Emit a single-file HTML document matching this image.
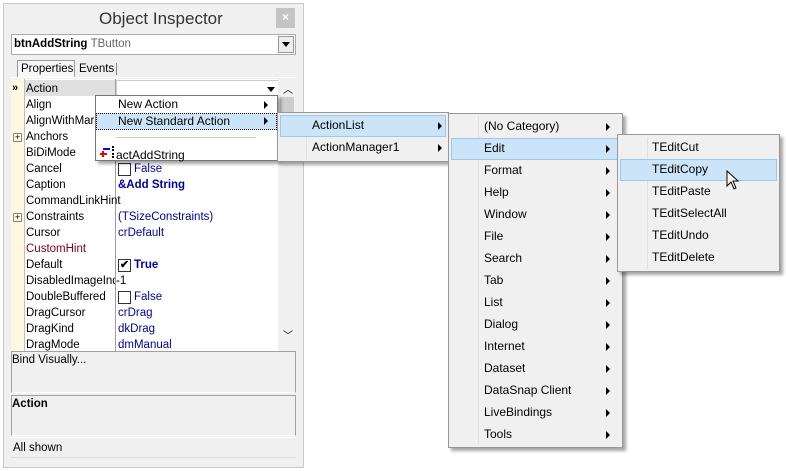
<!DOCTYPE html>
<html><head><style>
*{margin:0;padding:0;box-sizing:border-box}
body{width:786px;height:471px;background:#fff;position:relative;overflow:hidden;font-family:"Liberation Sans",sans-serif;font-size:11.5px;color:#000}
.a{position:absolute}
.t{position:absolute;white-space:nowrap;line-height:16px}
.menu{position:absolute;background:#f0f0f0;border:1px solid #979797;box-shadow:3px 3px 3px rgba(0,0,0,.35)}
.mi{position:absolute;left:2px;right:2px;height:22px;line-height:20px;font-size:12px}
.mi span{position:absolute}
.hl{background:#cce4f7;border:1px solid #99c9ef}
.arr{position:absolute;width:0;height:0;border-left:4px solid #000;border-top:4px solid transparent;border-bottom:4px solid transparent}
.gut{position:absolute;top:2px;bottom:2px;width:1px;background:#e0e0e0}
.blue{color:#0000a0}
</style></head><body>
<div class="a" style="left:3px;top:3px;width:301px;height:465px;background:#f0f0f0;border:1px solid #c8c8c8"></div>
<div class="t" style="left:99px;top:9px;font-size:17px;line-height:20px;color:#333">Object Inspector</div>
<div class="a" style="left:276px;top:8px;width:19px;height:20px;background:#c4c4c4;color:#fff;font-size:12px;text-align:center;line-height:19px;font-weight:bold">×</div>
<div class="a" style="left:11px;top:34px;width:285px;height:21px;background:#fff;border:1px solid #aaa"></div>
<div class="t" style="left:14px;top:36px;font-weight:bold">btnAddString <span style="font-weight:normal;color:#666">TButton</span></div>
<div class="a" style="left:278px;top:36px;width:16px;height:17px;background:#eee;border:1px solid #999"></div>
<div class="arr" style="left:282px;top:42px;border:4px solid transparent;border-top:5px solid #000;border-bottom:none"></div>
<div class="a" style="left:17px;top:60px;width:58px;height:18px;background:#f7f7f7;border:1px solid #999;border-bottom:none"></div>
<div class="t" style="left:21px;top:61px">Properties</div>
<div class="t" style="left:79px;top:61px">Events</div>
<div class="a" style="left:116px;top:63px;width:1px;height:12px;background:#888"></div>
<div class="a" style="left:11px;top:77px;width:285px;height:1px;background:#fff"></div>
<!-- grid -->
<div class="a" style="left:11px;top:79px;width:285px;height:273px;background:#fff;overflow:hidden">
<div class="a" style="left:0;top:0;width:13px;height:273px;background:#fff8e1"></div>
<div class="a" style="left:13px;top:1px;width:91px;height:16px;background:#e0e0e0"></div>
<div class="a" style="left:104px;top:0;width:1px;height:273px;background:#a0a0a0"></div>
<div class="a" style="left:13px;top:0;width:1px;height:273px;background:#c0c0c0"></div>
<div class="a" style="left:267px;top:0;width:18px;height:273px;background:#f0f0f0"></div>
<div class="a" style="left:269px;top:18px;width:14px;height:60px;background:#cdcdcd"></div>
<div class="t" style="left:272px;top:4px;font-size:10px">︿</div>
<div class="t" style="left:272px;top:250px;font-size:10px">﹀</div>
<div class="a" style="left:105px;top:1px;width:162px;height:16px;border:1px solid #ccc"></div>
<div class="a" style="left:253px;top:2px;width:14px;height:14px;background:#fff"></div>
<div class="arr" style="left:256px;top:8px;border:4px solid transparent;border-top:5px solid #000;border-bottom:none"></div>
<div class="t" style="left:1px;top:1px;font-weight:bold;font-size:11px">»</div>
</div>
<div class="a" style="left:11px;top:80px;font-size:11.5px">
<div class="t" style="left:15px;top:1px">Action</div>
<div class="t" style="left:15px;top:17px">Align</div>
<div class="t" style="left:15px;top:33px">AlignWithMarg</div>
<div class="t" style="left:15px;top:49px">Anchors</div>
<div class="t" style="left:15px;top:65px">BiDiMode</div>
<div class="t" style="left:15px;top:81px">Cancel</div>
<div class="t" style="left:15px;top:97px">Caption</div>
<div class="t" style="left:15px;top:113px">CommandLinkHint</div>
<div class="t" style="left:15px;top:129px">Constraints</div>
<div class="t" style="left:15px;top:145px">Cursor</div>
<div class="t" style="left:15px;top:161px;color:#800020">CustomHint</div>
<div class="t" style="left:15px;top:177px">Default</div>
<div class="t" style="left:15px;top:193px;width:89px;overflow:hidden">DisabledImageIndex</div>
<div class="t" style="left:15px;top:209px">DoubleBuffered</div>
<div class="t" style="left:15px;top:225px">DragCursor</div>
<div class="t" style="left:15px;top:241px">DragKind</div>
<div class="t" style="left:15px;top:257px">DragMode</div>
<div class="a" style="left:2px;top:53px;width:9px;height:9px;border:1px solid #888;font-size:9px;line-height:7px;text-align:center">+</div>
<div class="a" style="left:2px;top:133px;width:9px;height:9px;border:1px solid #888;font-size:9px;line-height:7px;text-align:center">+</div>
<div class="a" style="left:107px;top:83px;width:13px;height:13px;border:1px solid #333;background:#fff"></div>
<div class="t blue" style="left:123px;top:81px">False</div>
<div class="t blue" style="left:107px;top:97px;font-weight:bold">&amp;Add String</div>
<div class="t blue" style="left:107px;top:129px">(TSizeConstraints)</div>
<div class="t blue" style="left:107px;top:145px">crDefault</div>
<div class="a" style="left:107px;top:179px;width:13px;height:13px;border:1px solid #333;background:#fff;font-size:11px;line-height:11px;text-align:center;font-weight:bold">✔</div>
<div class="t blue" style="left:123px;top:177px;font-weight:bold">True</div>
<div class="t" style="left:105px;top:193px">-1</div>
<div class="a" style="left:107px;top:211px;width:13px;height:13px;border:1px solid #333;background:#fff"></div>
<div class="t blue" style="left:123px;top:209px">False</div>
<div class="t blue" style="left:107px;top:225px">crDrag</div>
<div class="t blue" style="left:107px;top:241px">dkDrag</div>
<div class="t blue" style="left:107px;top:257px">dmManual</div>
</div>
<div class="a" style="left:11px;top:351px;width:285px;height:42px;border:1px solid #a0a0a0;border-bottom-color:#fff"></div>
<div class="t" style="left:12px;top:352px">Bind Visually...</div>
<div class="a" style="left:11px;top:395px;width:285px;height:41px;border:1px solid #a0a0a0;border-bottom-color:#fff"></div>
<div class="t" style="left:12px;top:396px;font-weight:bold">Action</div>
<div class="a" style="left:11px;top:437px;width:285px;height:21px;border-top:1px solid #fff;border-bottom:1px solid #ddd"></div>
<div class="t" style="left:13px;top:440px">All shown</div>

<!-- popup 1 -->
<div class="menu" style="left:95px;top:95px;width:183px;height:66px;background:#fff;border-color:#777">
<div class="t" style="left:22px;top:0px;font-size:12px">New Action</div>
<div class="arr" style="left:168px;top:5px"></div>
<div class="a" style="left:0;top:17px;width:181px;height:17px;background:#cce4f7;border:1px dotted #000"></div>
<div class="t" style="left:22px;top:17px;font-size:12px">New Standard Action</div>
<div class="arr" style="left:168px;top:21px"></div>
<div class="a" style="left:20px;top:41px;width:140px;height:1px;background:#ccc"></div>
<div class="a" style="left:7px;top:52px;width:7px;height:2px;background:#00f"></div>
<div class="a" style="left:4px;top:57px;width:7px;height:2px;background:#e00"></div>
<div class="a" style="left:6px;top:55px;width:2px;height:6px;background:#e00"></div>
<div class="a" style="left:16px;top:50px;width:2px;height:12px;border-left:2px dotted #000"></div>
<div class="t" style="left:20px;top:51px;font-size:12px">actAddString</div>
</div>
<!-- popup 2 -->
<div class="menu" style="left:277px;top:112px;width:172px;height:50px">
<div class="gut" style="left:28px"></div>
<div class="mi hl" style="top:2px"><span style="left:31px;top:-1px">ActionList</span><div class="arr" style="left:157px;top:6px"></div></div>
<div class="mi" style="top:24px"><span style="left:32px">ActionManager1</span><div class="arr" style="left:158px;top:7px"></div></div>
</div>
<!-- popup 3 -->
<div class="menu" style="left:448px;top:113px;width:175px;height:335px">
<div class="gut" style="left:29px"></div>
<div class="mi" style="top:2px"><span style="left:33px">(No Category)</span><div class="arr" style="left:155px;top:7px"></div></div>
<div class="mi hl" style="top:24px"><span style="left:32px;top:-1px">Edit</span><div class="arr" style="left:154px;top:6px"></div></div>
<div class="mi" style="top:46px"><span style="left:33px">Format</span><div class="arr" style="left:155px;top:7px"></div></div>
<div class="mi" style="top:68px"><span style="left:33px">Help</span><div class="arr" style="left:155px;top:7px"></div></div>
<div class="mi" style="top:90px"><span style="left:33px">Window</span><div class="arr" style="left:155px;top:7px"></div></div>
<div class="mi" style="top:112px"><span style="left:33px">File</span><div class="arr" style="left:155px;top:7px"></div></div>
<div class="mi" style="top:134px"><span style="left:33px">Search</span><div class="arr" style="left:155px;top:7px"></div></div>
<div class="mi" style="top:156px"><span style="left:33px">Tab</span><div class="arr" style="left:155px;top:7px"></div></div>
<div class="mi" style="top:178px"><span style="left:33px">List</span><div class="arr" style="left:155px;top:7px"></div></div>
<div class="mi" style="top:200px"><span style="left:33px">Dialog</span><div class="arr" style="left:155px;top:7px"></div></div>
<div class="mi" style="top:222px"><span style="left:33px">Internet</span><div class="arr" style="left:155px;top:7px"></div></div>
<div class="mi" style="top:244px"><span style="left:33px">Dataset</span><div class="arr" style="left:155px;top:7px"></div></div>
<div class="mi" style="top:266px"><span style="left:33px">DataSnap Client</span><div class="arr" style="left:155px;top:7px"></div></div>
<div class="mi" style="top:288px"><span style="left:33px">LiveBindings</span><div class="arr" style="left:155px;top:7px"></div></div>
<div class="mi" style="top:310px"><span style="left:33px">Tools</span><div class="arr" style="left:155px;top:7px"></div></div>
</div>
<!-- popup 4 -->
<div class="menu" style="left:617px;top:134px;width:163px;height:138px">
<div class="gut" style="left:29px"></div>
<div class="mi" style="top:2px"><span style="left:32px">TEditCut</span></div>
<div class="mi hl" style="top:24px"><span style="left:31px;top:-1px">TEditCopy</span></div>
<div class="mi" style="top:46px"><span style="left:32px">TEditPaste</span></div>
<div class="mi" style="top:68px"><span style="left:32px">TEditSelectAll</span></div>
<div class="mi" style="top:90px"><span style="left:32px">TEditUndo</span></div>
<div class="mi" style="top:112px"><span style="left:32px">TEditDelete</span></div>
</div>
<svg class="a" style="left:726px;top:170px" width="16" height="22" viewBox="0 0 16 22"><path d="M1 1 L1 16 L5 12 L8 19 L10 18 L7 11 L12 11 Z" fill="#fff" stroke="#000" stroke-width="1"/></svg>
</body></html>
